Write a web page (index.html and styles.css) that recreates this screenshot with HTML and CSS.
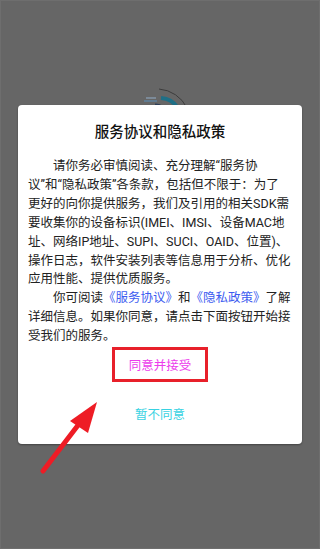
FILE: index.html
```html
<!DOCTYPE html>
<html lang="zh-CN">
<head>
<meta charset="utf-8">
<title>服务协议和隐私政策</title>
<link rel="stylesheet" href="styles.css">
</head>
<body>
<div class="screen">
  <svg class="splash-logo" width="60" height="30" viewBox="0 0 60 30">
    <path d="M28 8 A34 34 0 0 1 56 27" fill="none" stroke="#3c3c3c" stroke-width="1"/>
    <path d="M30 17 A22 22 0 0 1 47 27" fill="none" stroke="#1f6f86" stroke-width="4"/>
    <path d="M24 24 A12 12 0 0 1 32 27" fill="none" stroke="#2c3f5a" stroke-width="3"/>
    <rect x="15" y="16" width="10" height="2" fill="#7c8a98"/>
    <rect x="13" y="19" width="13" height="2" fill="#5f7a90"/>
  </svg>
  <div class="dialog">
    <h1 class="title">服务协议和隐私政策</h1>
    <p class="body">　　请你务必审慎阅读、充分理解“服务协<br>议”和“隐私政策”各条款，包括但不限于：为了<br>更好的向你提供服务，我们及引用的相关SDK需<br>要收集你的设备标识(IMEI、IMSI、设备MAC地<br>址、网络IP地址、SUPI、SUCI、OAID、位置)、<br>操作日志，软件安装列表等信息用于分析、优化<br>应用性能、提供优质服务。<br>　　你可阅读<span class="link">《服务协议》</span>和<span class="link">《隐私政策》</span>了解<br>详细信息。如果你同意，请点击下面按钮开始接<br>受我们的服务。</p>
    <div class="actions">
      <div class="agree">同意并接受</div>
      <div class="decline">暂不同意</div>
    </div>
  </div>
  <svg class="arrow" width="320" height="549" viewBox="0 0 320 549">
    <line x1="43" y1="471" x2="82" y2="420" stroke="#ee1c25" stroke-width="5" stroke-linecap="round"/>
    <polygon points="97,402 70,421 88,433" fill="#ee1c25"/>
  </svg>
</div>
</body>
</html>
```

FILE: styles.css
```css
html, body {
  margin: 0;
  padding: 0;
}
body {
  background: #666666;
  font-family: Roboto, "Noto Sans CJK SC", sans-serif;
}
.screen {
  position: relative;
  width: 320px;
  height: 549px;
  box-sizing: border-box;
  padding: 105px 18px 0 18px;
  border: 1px solid #6e6e6e;
  overflow: hidden;
}
.splash-logo {
  position: absolute;
  left: 130px;
  top: 80px;
}
.dialog {
  position: relative;
  height: 339px;
  box-sizing: border-box;
  margin-top: -1px;
  margin-left: -1px;
  margin-right: -1px;
  background: #ffffff;
  border-radius: 4px;
  box-shadow: 0 1px 2px rgba(0, 0, 0, 0.35);
  padding: 18px 10px 0 10px;
}
.title {
  margin: 0;
  font-size: 14.5px;
  line-height: 20px;
  font-weight: 500;
  color: #111111;
  text-align: center;
}
.body {
  margin: 14px 0 0 0;
  font-size: 12.5px;
  line-height: 18.9px;
  color: #222222;
  white-space: nowrap;
}
.link {
  color: #3d5cf0;
}
.actions {
  display: flex;
  flex-direction: column;
  align-items: center;
}
.agree {
  margin-top: 1px;
  width: 96px;
  height: 35px;
  box-sizing: border-box;
  border: 3.5px solid #e8202a;
  display: flex;
  align-items: center;
  justify-content: center;
  font-size: 12.5px;
  color: #ec3cec;
}
.decline {
  margin-top: 23px;
  font-size: 12.5px;
  line-height: 20px;
  color: #38d2e2;
}
.arrow {
  position: absolute;
  left: -1px;
  top: -1px;
}
```
